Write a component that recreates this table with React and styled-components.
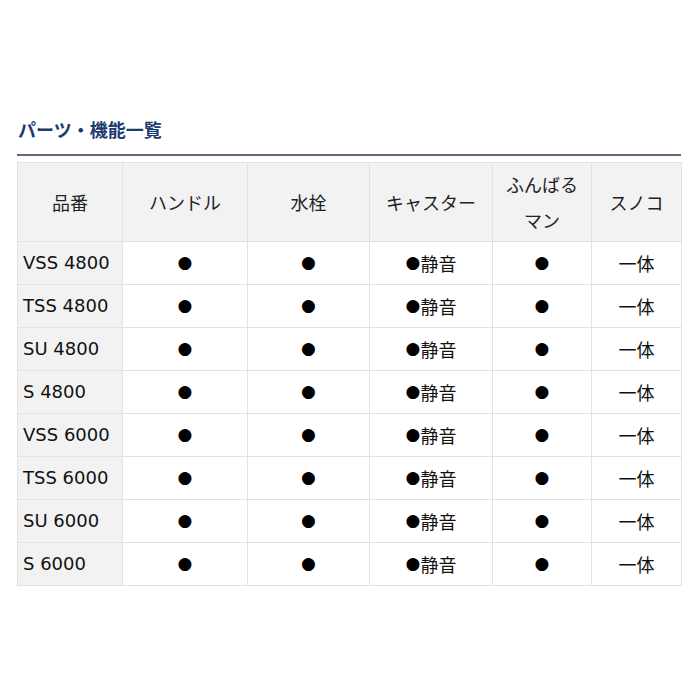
import React from 'react';
import styled, {createGlobalStyle} from 'styled-components';

const rows = ['VSS 4800', 'TSS 4800', 'SU 4800', 'S 4800', 'VSS 6000', 'TSS 6000', 'SU 6000', 'S 6000'];

function App() {
  return (
    <>
      <GlobalStyle />
      <Page>
        <Title>パーツ・機能一覧</Title>
        <Table>
          <colgroup>
            <col style={{width: 105}} />
            <col style={{width: 125}} />
            <col style={{width: 122}} />
            <col style={{width: 123}} />
            <col style={{width: 99}} />
            <col style={{width: 90}} />
          </colgroup>
          <thead>
            <tr>
              <Th>品番</Th>
              <Th>ハンドル</Th>
              <Th>水栓</Th>
              <Th>キャスター</Th>
              <Th>ふんばる<br />マン</Th>
              <Th>スノコ</Th>
            </tr>
          </thead>
          <tbody>
            {rows.map(name => (
              <tr key={name}>
                <Name>{name}</Name>
                <Td><Dot>●</Dot></Td>
                <Td><Dot>●</Dot></Td>
                <Td><Dot>●</Dot>静音</Td>
                <Td><Dot>●</Dot></Td>
                <Td>一体</Td>
              </tr>
            ))}
          </tbody>
        </Table>
      </Page>
    </>
  );
}

export default App;

const GlobalStyle = createGlobalStyle`
  body {
    margin: 0;
    background: #fff;
    font-family: "Noto Sans CJK JP", sans-serif;
    color: #222;
  }
`
const Page = styled.div`
  width: 664px;
  padding: 114px 0 0 17px;
`
const Title = styled.h2`
  margin: 0;
  padding: 0 0 10px 1px;
  font-size: 18px;
  line-height: 30px;
  font-weight: 700;
  color: #1d3b72;
  border-bottom: 2px solid #5d6a7e;
`
const Table = styled.table`
  width: 664px;
  margin-top: 6px;
  border-collapse: collapse;
  table-layout: fixed;
  font-size: 18px;
  line-height: 36px;
`
const Th = styled.th`
  height: 72px;
  padding: 3px 4px;
  background: #f2f2f2;
  border: 1px solid #e2e2e2;
  font-weight: 400;
  text-align: center;
  vertical-align: middle;
  color: #222;
`
const Td = styled.td`
  height: 36px;
  padding: 3px 4px;
  border: 1px solid #e2e2e2;
  text-align: center;
  vertical-align: middle;
  color: #111;
`
const Name = styled(Td)`
  background: #f2f2f2;
  font-family: "DejaVu Sans", sans-serif;
  text-align: left;
  padding-left: 5px;
  white-space: nowrap;
`
const Dot = styled.span`
  display: inline-block;
  font-family: "DejaVu Sans", sans-serif;
  font-size: 17px;
  line-height: 16px;
  vertical-align: 3px;
  color: #000;
`
